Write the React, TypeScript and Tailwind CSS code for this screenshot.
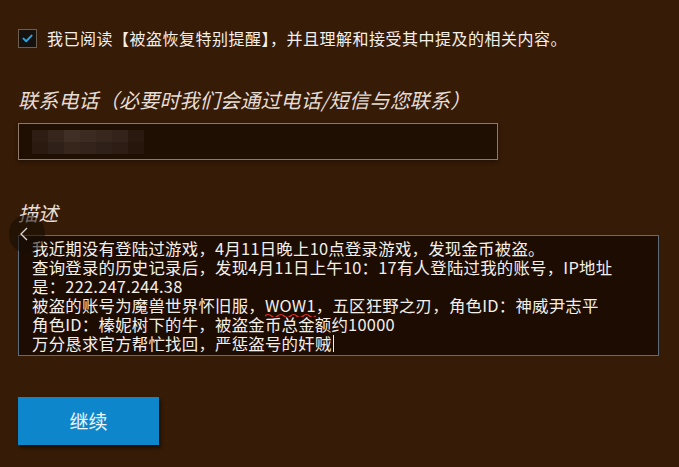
import React from 'react'

const font = '[font-family:"Noto_Sans_CJK_SC","Noto_Sans",sans-serif]'

const blurBlocks = [
  ['#2e1d12', '#35251b', '#3f2f24', '#3b2b20', '#37271c', '#33231a', '#2a190e'],
  ['#2a1a10', '#30201a', '#36261c', '#33231a', '#30201a', '#2d1d14', '#26160c'],
]

function CheckMark() {
  return (
    <svg width="11" height="9" viewBox="0 0 11 9" fill="none">
      <path d="M1.5 4.6 L4.2 7.2 L9.6 1.6" stroke="#2fa3dc" strokeWidth="2" strokeLinecap="round" strokeLinejoin="round" />
    </svg>
  )
}

// spellcheck squiggle under a word
function Squiggle({ children }: { children: React.ReactNode }) {
  return (
    <span className="relative inline-block">
      {children}
      <svg className="absolute left-0 bottom-[-2px]" width="100%" height="4" preserveAspectRatio="none" viewBox="0 0 40 4">
        <path d="M0 3 Q2.5 0 5 3 T10 3 T15 3 T20 3 T25 3 T30 3 T35 3 T40 3" stroke="#e0301e" strokeWidth="1.2" fill="none" />
      </svg>
    </span>
  )
}

export default function App() {
  return (
    <div className={`w-[679px] h-[467px] overflow-hidden bg-[#361b06] text-white ${font}`}>
      <div className="flex flex-col pl-[18px] pt-[28px]">
        {/* agreement */}
        <div className="flex items-center gap-[10px] h-[20px]">
          <div className="w-[19px] h-[19px] border border-[#6e5e50] bg-[#15110f] flex items-center justify-center">
            <CheckMark />
          </div>
          <span className="text-[16px] leading-[20px] tracking-[0.5px] text-[#f4efe9]">
            我已阅读【被盗恢复特别提醒】，并且理解和接受其中提及的相关内容。
          </span>
        </div>

        {/* phone */}
        <div className="mt-[39px] text-[20px] leading-[26px] tracking-[0.2px] italic text-[#e6ded6]">
          联系电话（必要时我们会通过电话/短信与您联系）
        </div>
        <div className="mt-[10px] w-[480px] h-[37px] border border-[#8d7b68] bg-[#1f0e02] shadow-[0_2px_4px_rgba(0,0,0,0.35)] flex items-center pl-[13px]">
          <div className="flex flex-col">
            {blurBlocks.map((row, i) => (
              <div key={i} className="flex">
                {row.map((c, j) => (
                  <div key={j} className="w-[16px] h-[12px]" style={{ backgroundColor: c }} />
                ))}
              </div>
            ))}
          </div>
        </div>

        {/* description */}
        <div className="mt-[40px] text-[20px] leading-[26px] italic text-[#e6ded6]">描述</div>
        <div className="relative mt-[9px] w-[641px]">
          <div className="absolute left-[-9px] top-[-20px] w-[36px] h-[38px] rounded-full bg-[rgba(20,12,6,0.55)] flex items-center pl-[10px]">
            <svg width="10" height="14" viewBox="0 0 10 14" fill="none">
              <path d="M8 1 L2 7 L8 13" stroke="#d8d2cc" strokeWidth="1.4" />
            </svg>
          </div>
          <div className="h-[121px] border border-[#5d6b7a] bg-[#1d0c02] pl-[13px] pt-[3px] text-[16.4px] leading-[19px] tracking-[0.25px] text-[#f3efea] whitespace-nowrap">
            <div>我近期没有登陆过游戏，4月11日晚上10点登录游戏，发现金币被盗。</div>
            <div>查询登录的历史记录后，发现4月11日上午10：17有人登陆过我的账号，IP地址</div>
            <div>是：222.247.244.38</div>
            <div>
              被盗的账号为魔兽世界怀旧服，<Squiggle>WOW1</Squiggle>，五区狂野之刃，角色ID：神威尹志平
            </div>
            <div>角色ID：榛妮树下的牛，被盗金币总金额约10000</div>
            <div className="flex items-center">
              万分恳求官方帮忙找回，严惩盗号的奸贼
              <span className="inline-block w-px h-[17px] bg-[#f3efea] ml-[1px]" />
            </div>
          </div>
        </div>

        {/* submit */}
        <button className="mt-[41px] w-[141px] h-[48px] bg-[#0e86cb] text-[19px] text-[#eef7fc] shadow-[2px_3px_3px_rgba(0,0,0,0.45)]">
          继续
        </button>
      </div>
    </div>
  )
}
